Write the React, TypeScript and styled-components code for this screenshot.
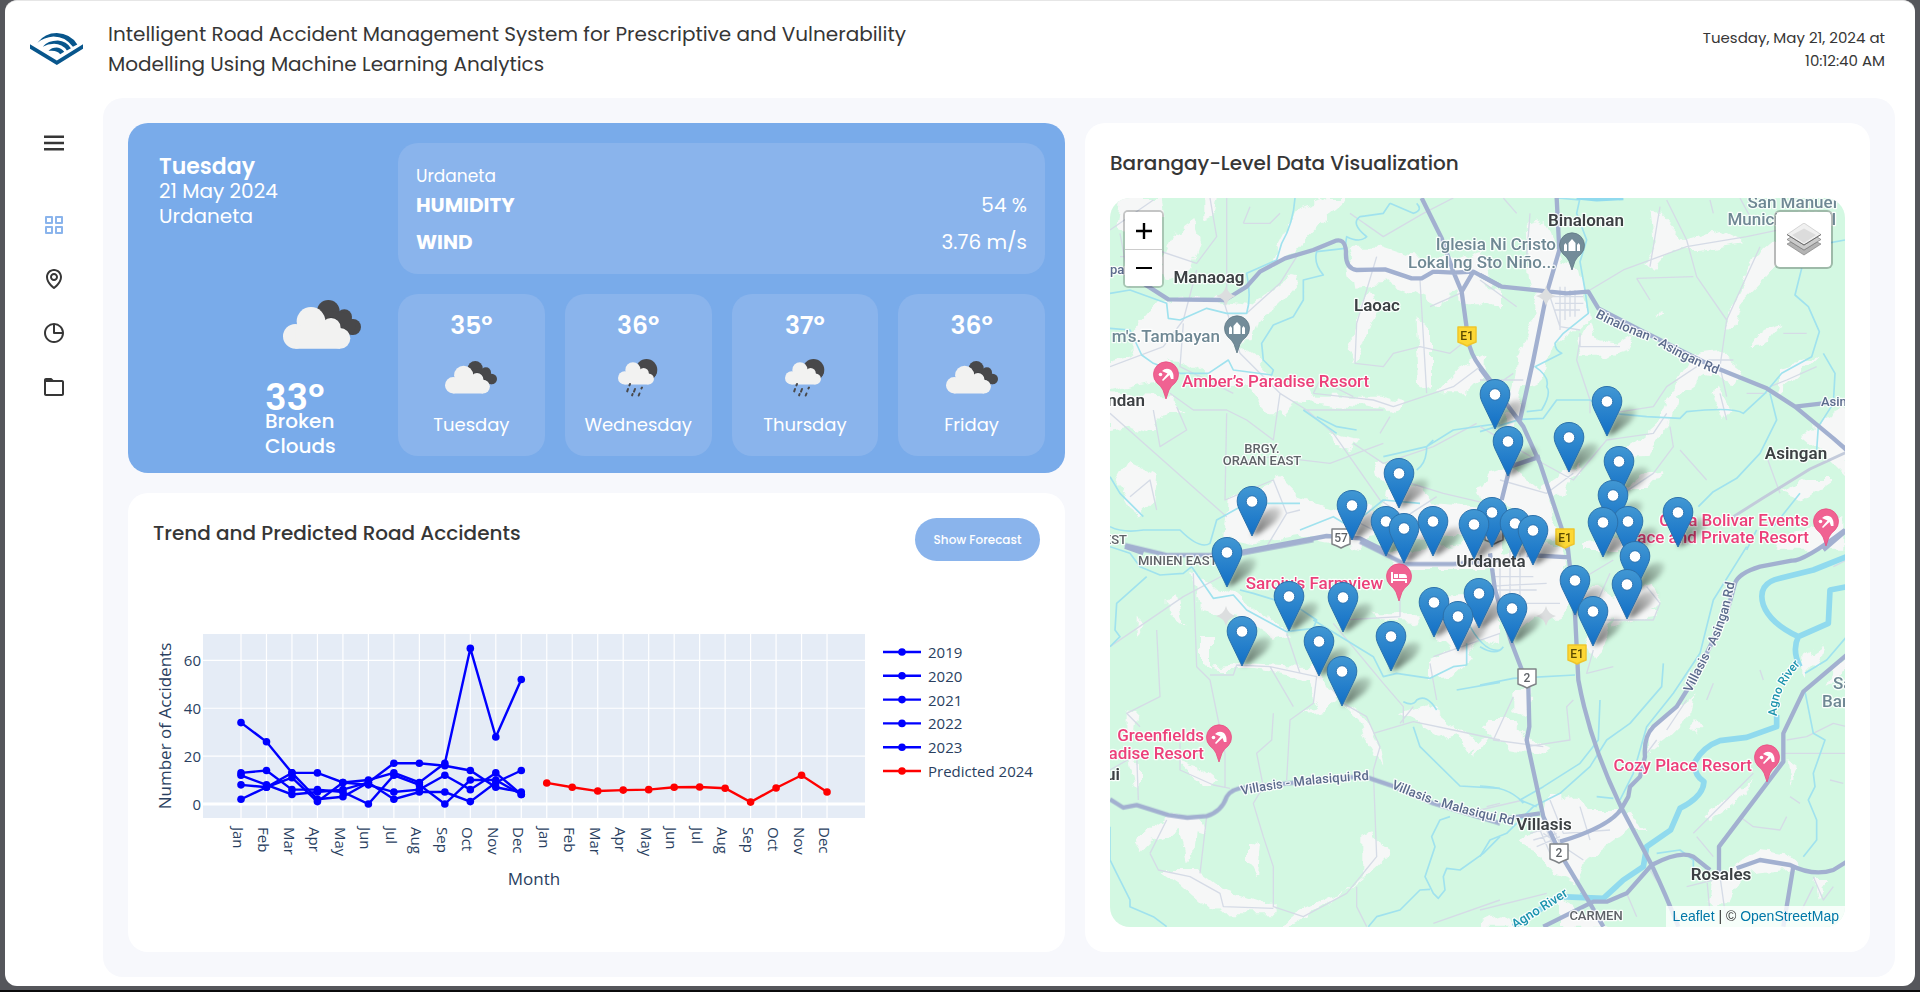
import React from "react";
import styled, { createGlobalStyle } from "styled-components";
import { BiMenu, BiGridAlt, BiMap, BiPieChartAlt, BiFolder } from "react-icons/bi";

const GlobalStyle = createGlobalStyle`
  *, *::before, *::after { box-sizing: border-box; }
  body {
    margin: 0;
    background: #55565b;
    color: #363636;
    font-family: "Poppins", "Inter", sans-serif;
  }
  h1, h2, p, ul, dl, dd, dt { margin: 0; padding: 0; }
  button { font-family: inherit; }
`;

/* ---------- page shell ---------- */

const Frame = styled.div`
  min-height: 100vh;
  padding: 0 5px 4px;
  border-bottom: 2px solid #0b0b0c;
  display: flex;
  flex-direction: column;
`;

const Shell = styled.div`
  flex: 1;
  display: flex;
  flex-direction: column;
  background: #ffffff;
  border-top: 1px solid #e6e6e6;
  border-radius: 12px;
`;

const Header = styled.header`
  min-height: 97px;
  padding: 0 30px 2px 25px;
  display: flex;
  align-items: center;
  gap: 25px;
`;

const PageTitle = styled.h1`
  flex: 0 1 820px;
  font-size: 20px;
  font-weight: 400;
  line-height: 30px;
`;

const Clock = styled.time`
  margin-left: auto;
  width: 200px;
  font-size: 15px;
  line-height: 23px;
  text-align: right;
`;

const Body = styled.div`
  flex: 1;
  display: flex;
  padding: 0 20px 9px 0;
`;

const Sidebar = styled.aside`
  flex: 0 0 98px;
  padding-top: 18px;
  display: flex;
  flex-direction: column;
  align-items: center;
  gap: 28px;
`;

const MenuButton = styled.button`
  width: 54px;
  height: 54px;
  padding: 0;
  border: 0;
  background: none;
  color: #363636;
  font-size: 30px;
  display: grid;
  place-items: center;
  cursor: pointer;
`;

const NavList = styled.ul`
  list-style: none;
`;

const NavLink = styled.a<{ $active?: boolean }>`
  width: 54px;
  height: 54px;
  display: grid;
  place-items: center;
  font-size: 24px;
  color: ${(p) => (p.$active ? "#8ab4ec" : "#363636")};
`;

const Main = styled.main`
  flex: 1;
  min-width: 0;
  padding: 25px;
  border-radius: 20px;
  background: #f7f8fc;
  display: grid;
  grid-template-columns: minmax(0, 937fr) minmax(0, 785fr);
  gap: 20px;
`;

const LeftColumn = styled.div`
  display: flex;
  flex-direction: column;
  gap: 20px;
`;

const Card = styled.section`
  padding: 25px;
  border-radius: 20px;
  background: #ffffff;
  display: flex;
  flex-direction: column;
`;

const ChartCard = styled(Card)`
  flex: 1;
`;

const CardHeader = styled.div`
  display: flex;
  justify-content: space-between;
  align-items: flex-start;
`;

const CardTitle = styled.h2`
  font-size: 20px;
  font-weight: 500;
  line-height: 30px;
`;

const PillButton = styled.button`
  width: 125px;
  height: 43px;
  padding: 0;
  border: 0;
  border-radius: 22px;
  background: #8ab4ec;
  color: #ffffff;
  font-size: 12px;
  font-weight: 500;
  cursor: pointer;
`;

/* ---------- weather ---------- */

const WeatherCard = styled.section`
  min-height: 350px;
  padding: 20px 20px 14px 31px;
  border-radius: 20px;
  background: #79abea;
  color: #ffffff;
  display: grid;
  grid-template-columns: 239px minmax(0, 1fr);
`;

const Today = styled.div`
  padding-top: 11px;
  display: flex;
  flex-direction: column;
  font-size: 20px;
  line-height: 25px;
`;

const Weekday = styled.h2`
  font-size: 22px;
  font-weight: 600;
  line-height: 25px;
`;

const TodayIcon = styled.div`
  margin: auto 0 0 124px;
  line-height: 0;
`;

const TodayNow = styled.div`
  margin: 38px 0 0 106px;
  font-weight: 500;
`;

const BigTemp = styled.p`
  font-size: 36px;
  font-weight: 600;
  line-height: 22px;
`;

const WeatherDetail = styled.div`
  padding-bottom: 3px;
  display: grid;
  grid-template-rows: 131px 1fr;
  gap: 20px;
`;

const Panel = styled.div`
  padding: 22px 18px 20px;
  border-radius: 20px;
  background: #8ab4ec;
`;

const Place = styled.p`
  font-size: 17px;
  line-height: 22px;
`;

const Metrics = styled.dl`
  font-size: 20px;
  line-height: 37px;
`;

const Metric = styled.div`
  display: flex;
  justify-content: space-between;

  dt { font-weight: 700; }
`;

const Days = styled.ul`
  list-style: none;
  display: grid;
  grid-template-columns: repeat(4, minmax(0, 1fr));
  gap: 20px;
`;

const Day = styled.li`
  padding: 14px 0 17px;
  border-radius: 20px;
  background: #8ab4ec;
  display: flex;
  flex-direction: column;
  align-items: center;
`;

const DayTemp = styled.p`
  font-size: 25px;
  font-weight: 600;
  line-height: 36px;
`;

const DayIcon = styled.div`
  flex: 1;
  display: grid;
  place-items: center;
`;

const DayName = styled.p`
  font-size: 18px;
  line-height: 28px;
`;

function LightCloud() {
  return (
    <g fill="#f2f2f1">
      <circle cx="84" cy="64" r="43" />
      <circle cx="37" cy="109" r="37" />
      <circle cx="144" cy="83" r="29" />
      <circle cx="171" cy="115" r="31" />
      <path d="M37 90H60V60H110V80H165V95H171V146H37Z" />
    </g>
  );
}

function CloudsIcon({ width }: { width: number }) {
  return (
    <svg width={width} viewBox="0 0 234 146" role="img" aria-label="Broken clouds">
      <g fill="#48484a">
        <circle cx="136" cy="34" r="34" />
        <circle cx="184" cy="51" r="23" />
        <circle cx="210" cy="81" r="24" />
        <path d="M110 30L190 40L220 70L210 105L140 90Z" />
      </g>
      <path
        d="M110 30A44 44 0 0 1 126 54M140 53A30 30 0 0 1 173 84A32 32 0 0 1 201 106"
        stroke="#2d2f35"
        strokeOpacity="0.5"
        strokeWidth="3"
        fill="none"
      />
      <LightCloud />
    </svg>
  );
}

function RainIcon() {
  return (
    <svg width="40" viewBox="0 0 40 38" role="img" aria-label="Shower rain">
      <circle cx="28.500" cy="10.800" r="10.800" fill="#48484a" />
      <path d="M33 12L39 12Q38 17 35.500 19Z" fill="#48484a" />
      <g transform="translate(0 -0.5) scale(0.178)">
        <LightCloud />
      </g>
      <g stroke="#48484a" strokeWidth="2" strokeLinecap="round">
        <path d="M12 25l-.6 1.4M10 30l-.8 2.4M17 30l-1 2.6M24 28.500l-.6 1M14.600 35l-.5 1.400M21.500 34.500l-.8 2" />
      </g>
    </svg>
  );
}

const forecast = [
  { day: "Tuesday", temp: 35, rain: false },
  { day: "Wednesday", temp: 36, rain: true },
  { day: "Thursday", temp: 37, rain: true },
  { day: "Friday", temp: 36, rain: false },
];

function Weather() {
  return (
    <WeatherCard aria-label="Weather">
      <Today>
        <Weekday>Tuesday</Weekday>
        <p>21 May 2024</p>
        <p>Urdaneta</p>
        <TodayIcon>
          <CloudsIcon width={78} />
        </TodayIcon>
        <TodayNow>
          <BigTemp>33º</BigTemp>
          <p>Broken</p>
          <p>Clouds</p>
        </TodayNow>
      </Today>
      <WeatherDetail>
        <Panel>
          <Place>Urdaneta</Place>
          <Metrics>
            <Metric>
              <dt>HUMIDITY</dt>
              <dd>54 %</dd>
            </Metric>
            <Metric>
              <dt>WIND</dt>
              <dd>3.76 m/s</dd>
            </Metric>
          </Metrics>
        </Panel>
        <Days>
          {forecast.map((f) => (
            <Day key={f.day}>
              <DayTemp>{f.temp}º</DayTemp>
              <DayIcon>{f.rain ? <RainIcon /> : <CloudsIcon width={52} />}</DayIcon>
              <DayName>{f.day}</DayName>
            </Day>
          ))}
        </Days>
      </WeatherDetail>
    </WeatherCard>
  );
}

/* ---------- chart ---------- */

const ChartSvg = styled.svg`
  flex: 1;
  width: 100%;
  min-height: 366px;
  font-family: "Open Sans", sans-serif;
  fill: #2a3f5f;
`;

const months = ["Jan", "Feb", "Mar", "Apr", "May", "Jun", "Jul", "Aug", "Sep", "Oct", "Nov", "Dec"];

const history: Record<string, number[]> = {
  "2019": [34, 26, 13, 2, 3, 9, 17, 17, 16, 14, 7, 5],
  "2020": [13, 14, 6, 6, 5, 0, 12, 8, 0, 10, 10, 4],
  "2021": [8, 7, 11, 1, 9, 8, 5, 6, 12, 6, 13, 4],
  "2022": [12, 8, 4, 5, 6, 9, 2, 5, 5, 1, 9, 14],
  "2023": [2, 7, 13, 13, 9, 10, 13, 9, 17, 65, 28, 52],
};
const predicted = [8.8, 7, 5.4, 5.8, 6, 7, 7.1, 6.6, 0.8, 6.7, 12, 5];

const PLOT = { left: 50, top: 73, width: 662, height: 184 };
const tickX = (i: number) => 88 + i * 25.48;
const valueY = (v: number) => 243 - v * 2.394;

function Series({ values, start, color }: { values: number[]; start: number; color: string }) {
  const points = values.map((v, i) => [tickX(start + i), valueY(v)]);
  return (
    <g fill={color}>
      <polyline points={points.map((p) => p.join(",")).join(" ")} fill="none" stroke={color} strokeWidth="2.400" />
      {points.map(([x, y]) => (
        <circle key={x} cx={x} cy={y} r="3.800" />
      ))}
    </g>
  );
}

function AccidentChart() {
  const ticks = [...months, ...months];
  const legend = [...Object.keys(history), "Predicted 2024"];
  return (
    <ChartSvg viewBox="0 0 887 366" role="img" aria-label="Number of accidents by month">
      <rect x={PLOT.left} y={PLOT.top} width={PLOT.width} height={PLOT.height} fill="#e5ecf6" />
      <g stroke="#ffffff" strokeWidth="1.200">
        {ticks.map((_, i) => (
          <line key={i} x1={tickX(i)} x2={tickX(i)} y1={PLOT.top} y2={PLOT.top + PLOT.height} />
        ))}
        {[0, 20, 40, 60].map((v) => (
          <line
            key={v}
            x1={PLOT.left}
            x2={PLOT.left + PLOT.width}
            y1={valueY(v)}
            y2={valueY(v)}
            strokeWidth={v === 0 ? 3 : 1.2}
          />
        ))}
      </g>
      {Object.entries(history).map(([year, values]) => (
        <Series key={year} values={values} start={0} color="#0000ff" />
      ))}
      <Series values={predicted} start={12} color="#ff0000" />
      <g fontSize="15">
        {[0, 20, 40, 60].map((v) => (
          <text key={v} x="48" y={valueY(v) + 6} textAnchor="end">
            {v}
          </text>
        ))}
        {legend.map((name, i) => {
          const y = 91 + i * 23.8;
          const color = name.startsWith("Pred") ? "#ff0000" : "#0000ff";
          return (
            <g key={name}>
              <line x1="730" x2="768" y1={y} y2={y} stroke={color} strokeWidth="2.400" />
              <circle cx="749" cy={y} r="3.800" fill={color} />
              <text x="775" y={y + 6}>
                {name}
              </text>
            </g>
          );
        })}
      </g>
      <g fontSize="15">
        {ticks.map((m, i) => (
          <text key={i} transform={`translate(${tickX(i) - 8} 266) rotate(90)`}>
            {m}
          </text>
        ))}
      </g>
      <g fontSize="17">
        <text transform="translate(18 165) rotate(-90)" textAnchor="middle">
          Number of Accidents
        </text>
        <text x="381" y="324" textAnchor="middle">
          Month
        </text>
      </g>
    </ChartSvg>
  );
}

/* ---------- map ---------- */

const MapArea = styled.div`
  position: relative;
  flex: 1;
  min-height: 500px;
  margin-top: 20px;
  border-radius: 20px;
  overflow: hidden;
`;

const MapSvg = styled.svg`
  position: absolute;
  inset: 0;
  width: 100%;
  height: 100%;
  background: #d3f8e2;
  font-family: "Roboto", sans-serif;
`;

const ZoomControl = styled.div`
  position: absolute;
  top: 12px;
  left: 13px;
  width: 41px;
  border: 2px solid rgba(0, 0, 0, 0.2);
  border-radius: 5px;
  background-clip: padding-box;
  overflow: hidden;
`;

const ZoomButton = styled.button`
  display: grid;
  place-items: center;
  width: 100%;
  height: 37px;
  padding: 0;
  border: 0;
  background: #ffffff;
  cursor: pointer;

  & + & { border-top: 1px solid #cccccc; }
`;

const LayersButton = styled.button`
  position: absolute;
  top: 12px;
  right: 12px;
  width: 59px;
  height: 59px;
  padding: 0;
  border: 2px solid rgba(0, 0, 0, 0.25);
  border-radius: 6px;
  background: #ffffff;
  background-clip: padding-box;
  display: grid;
  place-items: center;
  cursor: pointer;
`;

const Attribution = styled.p`
  position: absolute;
  right: 0;
  bottom: 0;
  padding: 0 6px;
  background: rgba(255, 255, 255, 0.8);
  font-family: "Liberation Sans", Arial, sans-serif;
  font-size: 14px;
  line-height: 21px;

  a {
    color: #0078a8;
    text-decoration: none;
  }
`;

type Tile = {
  origin: string;
  patches: string;
  minor: string;
  streams: string;
  river?: string;
  roads: string;
};

/* Each quarter of the map is plotted on a grid three times finer than the screen. */
const tiles: Tile[] = [
  {
    origin: "translate(-10 -18)",
    patches:
      "M60 54h130l10 50-50 20-60 40-40-20zM210 170l70-50 20 60-30 90-70 30-20-60zM310 54l40 0-10 50-30 10zM590 90l90-36 60 0-60 50-50 60-50 60-70 40 20-60zM170 370l110-20 180 20 120-90 20 20-60 70-60 40-20 80-60 0-60 40-100 20-130-20-30-60zM250 470l120 0 90 60 60 60 60 50-20 60-60 0-60-80-80-10-100-60zM30 540l130-40 60 60-60 40-130 30zM30 640l180 10 40 40-60 10-40 60-60-20-60 10zM90 840l80 40-10 80-50 50-60-100zM740 200l90 0 90 30 150 10 80-30 30 100-110 20-60 40-80-40-60-20-110 10zM800 340l40 30-30 80-50 100-20-40zM1060 300l60 0 80 30 0 60-60-20-60 0zM500 640l110-50 30 60 200 0 80 20-40 30-80-20-220-20-30 60zM690 760l90 20-20 30-60-10zM950 420l40 20 0 190-30-20zM1080 560l80-40 0 60-60 60-90 0zM380 960l160-70 60 60 120 40 60-40 60 80-60 80-180-40-140 20-90-20zM820 840l40 10 50 100-70-40zM860 940l90-30 60 60 190 20 0 80-360 0z",
    minor:
      "M30 150L160 60M130 110L170 210 290 250 350 170 330 54M430 130H510L540 100M60 160L90 320M290 270L250 420 190 500 30 560M370 360L420 520 540 640 620 690 700 760 840 960 900 1000M380 54V340M590 230L540 310 440 400M750 100L850 170 970 100 1060 54M830 230L770 430 765 550 850 560 880 520 960 500 1050 520 1100 480M960 300L980 640M990 380L1080 340M540 640L520 780 440 720 380 690 280 690 210 640M30 700L380 1010M160 690L180 800 260 750 230 680M640 640L820 660 880 680 1060 620 1140 560M760 790L850 850 1000 800 1130 730M380 700L375 960 520 900 560 1000 600 990M610 690L850 690M370 850L520 830 690 850 850 790M900 900L1030 940 1200 980M720 1000L840 1060 1010 950M500 1100L560 1000M90 950L150 900 170 990M250 430L240 560 400 640M450 80L430 130M60 230H130L150 160M640 640L660 600 760 650M870 710L840 760",
    streams:
      "M585 54Q580 130 545 190L530 240 440 280Q455 350 440 400L380 400 320 385 240 420 205 415 200 370 90 330 30 340M870 70L940 100Q970 90 950 70M870 70L850 100 780 110Q750 130 800 170 780 190 740 170L735 205 650 215Q640 250 670 285L610 300 610 360 580 410 520 435 485 490 490 540 520 570 515 585 400 570 385 540 325 580 240 580 160 550 125 525 90 450 30 445M610 690L710 760M650 710L710 740 770 750M1200 730L1060 750 980 800 850 830M1000 780L980 800Q980 850 950 870M30 890L60 940 130 1010M30 1040Q70 1060 130 1050L240 1050Q300 1110 330 1090L350 1020 440 970 600 970M600 1050L700 1010 750 1040 850 960 960 970",
    roads:
      "M60 270L130 310 205 358 375 360 440 320 480 275 555 235 640 210 700 185Q735 170 738 215 735 265 770 270L855 268 935 295 965 295 1000 275 1060 278 1120 275 1200 318M965 54L1025 175 1060 275 1085 335 1105 480Q1110 520 1140 560L1200 640M1120 275L1085 335M75 1100L130 1120M400 1120L680 1068 780 1075 850 1110",
  },
  {
    origin: "translate(370 -18)",
    patches:
      "M140 140l60-20 40 130 60 30 30 130-60 60-60 40-20 80-60 30-30 140-20-20 30-210 60-130-20-100zM520 80l90 100 100-30 80 40-130 20-90 0-50 60-30-20 40-60zM850 200l60-50 60 20-60 60-60 70-60 60-20 70-40 20 40-110zM540 390l10 10-20 20zM300 480l30-60 20 70 60 10 50-30-20 40-70 20-60 0zM800 510l40-50 60-20-30 40-60 30zM640 520l70-10 80 60-20 40-90-20-90 60-20 80-70 100-120 10 80-50 70-60 50-110zM710 620l40 70-20 30-30-60zM910 560l100-30-60 60-60 50zM1020 720l80-40 0 210-60-60-70-60zM30 880l60-20 90 70 120-80-40 80-50 40 20 100-60 20-40-80-60-40-80-30zM900 940l80-40 80 0-90 60zM300 1090l190-20 0 40-190 0zM430 930l60-50 60-10-50 60zM900 1070l190-60v99h-200z",
    minor:
      "M0 300L110 380M200 320L240 440 300 450M240 320V450M255 320V420M270 330V410M285 330V410M220 350H310M225 370H310M225 390H300M150 100L140 230 100 250M70 54L110 100M560 60L620 180 650 290 740 420 720 560 740 650M330 330L430 270 620 200 800 170 990 130M840 200L740 420M470 295L510 360M470 295L640 290M540 80L510 260M690 60L700 100M780 54L810 110M300 480L290 540 330 660 330 700M390 700L520 680 560 620 680 540 760 540M300 460L300 500 420 500M0 600H130M100 580L0 650M0 740L170 840 280 900 380 780 520 760 560 700M860 830L900 940M430 940L520 880 580 800 570 740M1010 560L920 600 870 620M720 640L740 720M600 810L680 900M910 460L980 460M60 900L200 940 280 880M800 640L860 640",
    streams:
      "M965 265L945 345 985 380 1018 455 995 530 905 580 855 640 790 700Q760 680 620 695L600 715 500 710 400 700 330 660 230 660 190 715 120 718 0 755M870 640L890 720 840 820 770 895 700 935 655 980M1030 520L1065 580 1060 670 1015 740 1010 810M300 54L290 100 320 180 300 245 315 330 325 400 250 460 225 490Q225 510 245 520L165 560Q210 590 200 620 215 640 185 690L140 695M960 940L880 1040M230 54L300 60M830 1050L800 1110M1095 180L1040 190",
    river: "M290 50L350 56 430 52",
    roads:
      "M230 54L238 210 200 340 160 540 120 720M0 285L65 320 260 340 325 335 355 385 480 450 700 560 860 625 945 680 1060 775 1100 810M945 680L1100 662M0 565L130 740 180 850 250 1060 262 1110M180 830L90 860 65 960M1030 1110L1100 1050",
  },
  {
    origin: "translate(-10 342)",
    patches:
      "M200 170l30-10 20 100-50-40zM270 90l50 40 100 40 100 80 60 30-60 10-80-50-80-20-60-10zM110 230l20 20-20 40zM300 300l30 0 0 90-30-30zM330 380l110-10 220 10 20 90-40 20-10-70-170-30-110 0zM640 420l90 70 60 40 50 90 10 60-50-80-20-60-60-60-50 30-60 10 60-50zM80 510l30 10-10 60-20-20zM820 220l140 0-20 30-100-10zM990 360l80-40 40 30-60 60-60 10zM900 520l80-30 60 50 100 70-30 30-40-60-50 10-80-50zM1110 610l60-20-40 60zM110 900l50-40 60-40 80 20 20 50-30-10-10 70-20 10-20-90-80 30-30 30zM450 900l30 10-10 100-20-40zM790 890l30-10 20 40 30 20-40 40-80 70-60 20-100 50-60 50 60 0 70 10-30 20-100-20 100-60 100-60 60-50zM180 990l110 0 80 60 110 40-10 30-140-10-90-80zM370 1100l160-10 0 30-180 0zM80 650l40 20 0 80-20-20zM230 660l60 20 60 50-30 10-50-40zM1000 160l200 0 0 160-60-20-60 60-60-60zM850 40l350-40 0 90-300 0z",
    minor:
      "M280 100L290 380 330 420 375 640 375 740M30 320L250 170 400 90M170 270L180 470 80 520 120 560M330 405L400 405 410 375 510 380 650 410 640 490 570 540 560 720M520 520L515 600 470 640 490 740 460 790 490 890 520 980 520 1100 610 1130 740 1060 830 950 820 690 840 620 800 530 730 490 690 440M820 580L940 545 1060 570 1200 600M700 250L850 430 910 500 910 550M560 280L600 400M900 170V230M730 240L900 230M990 370L1010 480M1000 350L1200 280M110 640L115 780M240 610L240 690 340 735 390 745M150 940L200 840M320 830L300 1000M150 940L175 990 270 1010 360 1060 370 1100 520 1105M770 1040V1100L800 1160M580 500L510 380M1160 800L1200 790M1000 1150L1200 1080M30 690L100 650M900 550L940 500",
    streams:
      "M30 20L90 40 120 80 180 105 250 100 275 80 340 175 400 165 440 210 560 275 640 265 650 240 590 200 460 160 420 150M640 240L820 350 850 410 890 400 990 415 1060 380 1100 375 1100 310M140 110L50 190 45 270 60 290 30 320M910 485Q940 500 950 480 980 460 1010 510M940 560L960 620 1080 738 1200 745M1070 450L1200 427M1050 830L1020 840 995 890 1005 920 975 1010 1000 1060 1015 1075 1035 1050 1030 1010 1040 985 1080 990 1150 940 1200 890M990 1048L960 1050 900 1110 830 1130 805 1160M30 860V960L50 1000 90 1080 90 1100 160 1130 200 1160M1100 240Q1150 340 1200 330",
    roads:
      "M75 15L200 45 400 45 640 0M780 5L915 72 1060 72 1200 60M30 778L70 803 110 795 205 825 262 833 320 828Q365 815 380 770 395 745 440 742L790 708 870 735 1000 790 1200 850",
  },
  {
    origin: "translate(370 342)",
    patches:
      "M30 60l130-60 90 20 20 160-20 50-90 0-60 50-50-60zM290 170l60-30 60 40-40 120-30 60-20-60zM380 180l130-40 30 40-60 60-80 20zM100 450l40 0 20 20-20 60-40-20zM40 540l60 0 60 60 60 20-20 30-110-20-80-60zM590 500l50-30-10 60-60 60-60 50-10-60zM640 530l20 30-20 20zM190 780l80-20 60 50 90 0 80 60-60 0-70 50-60 50-20 60-60-20-60-80-50-20 60-50zM680 820l70-50 60-50-30 60-90 60zM780 960l60-30 80 10 40 40-70 10-100 10-40 90-60 0 10-80zM1000 1020l50 0-40 50zM1040 440l20-60 60-30-60 80zM920 660l30 20-20 60zM0 1140l60-20 80 40-140 0zM240 1080l80 40 60 40-140 0zM970 350l60-40-20 60-40 40zM440 210l90 0 0 20-80 10z",
    minor:
      "M60 60V230M90 30V250M120 40V220M40 110H160M50 150H170M50 190H240M300 120L400 60M390 100L350 190M340 240L520 240 540 190 500 140M340 330L320 400 400 380M100 470L40 600 190 620M280 480L260 500 270 600 140 620M210 780L250 880 390 870M190 880L310 960M150 880L220 860M160 900L230 880M170 920L240 890M180 870L210 940M195 860L230 940M210 850L250 930M300 800L330 900M560 570L620 480M530 600L500 640M700 430L680 480M840 390L850 420M640 880L700 820 820 700M650 890L700 950M850 740L780 830 820 860 900 870 920 830M680 1010L690 1120M720 1010L740 1150M1000 1010L1030 1080 1060 1040M440 1060L470 1130M620 1040L700 1020M930 770L960 790M1000 1040L960 1120M0 810L130 780M0 1110L200 1060M1060 80L1100 60M920 600L980 590 1060 550 1100 560M910 640L1100 640M1050 720L1090 730M0 140L200 130M510 990L560 1070",
    streams:
      "M800 20L700 180 660 340 580 460 500 560 460 700 420 780M550 370L545 440 450 550 380 600 330 680 240 760 160 800 80 880 30 900 0 950M0 435L100 415 285 405M360 480L355 600 300 670 190 740 120 780 170 800M975 455L1000 580 1035 600 1000 700 1005 740 985 780 1010 840 1010 900 970 950M1100 290L1040 360 975 400M350 770L400 775M0 738Q90 740 130 790M530 940L600 930 640 960 640 1020M0 320Q50 350 70 320M300 1060L330 1070",
    river:
      "M1100 50L1000 90 900 115Q830 130 850 195 870 250 955 290L1045 250 1050 150 1100 140M955 290Q935 330 960 380M890 525L890 560 800 592 720 602Q670 620 645 665 640 705 672 725 670 770 600 805L572 870 500 920 490 980 430 1020 370 1075 240 1070 100 1160",
    roads:
      "M262 10L285 220 295 420Q330 610 425 805L515 975Q560 1070 595 1160M30 40L45 150 95 310 145 440 148 560 140 600 190 830 240 940 330 1090 370 1160M240 905Q390 860 425 805L445 770 450 740 480 710 495 650Q490 590 520 560L590 500 640 420 740 220 765 130Q775 100 840 80L935 62Q970 65 1095 -30M190 1160L340 1085 380 1085 440 1060 515 975Q600 930 640 950L690 990M770 985L840 960 930 975Q1000 1010 1060 990L1100 965M940 980L910 1160M717 1000L717 920 910 665 910 580 970 455 1100 345M80 835L180 820M140 45L270 52",
  },
];

const accidentPins = [
  [385, 231], [497, 238], [459, 274], [398, 278], [509, 298], [289, 310], [503, 332], [142, 338],
  [242, 342], [382, 349], [568, 349], [276, 358], [323, 358], [518, 358], [493, 359], [405, 360],
  [364, 361], [294, 365], [423, 367], [117, 389], [525, 393], [465, 417], [517, 421], [369, 430],
  [179, 433], [233, 434], [324, 439], [402, 445], [483, 448], [348, 453], [132, 468], [281, 473],
  [209, 478], [232, 508],
];

function PinShadow({ x, y }: { x: number; y: number }) {
  return (
    <path
      transform={`translate(${x} ${y})`}
      d="M0 0L8 -20Q18 -31 28 -28 32 -23 22 -13L8 -3Z"
      fill="url(#shade)"
      filter="url(#soft)"
    />
  );
}

function AccidentPin({ x, y }: { x: number; y: number }) {
  return (
    <g transform={`translate(${x} ${y})`}>
      <path
        d="M0 -49.500C-8.500 -49.500 -14.800 -43 -14.800 -35 -14.800 -31 -13.500 -28 -12 -25L0 0 12 -25C13.500 -28 14.800 -31 14.800 -35 14.800 -43 8.500 -49.500 0 -49.500Z"
        fill="url(#pinBlue)"
        stroke="#2a70ab"
        strokeWidth="1"
      />
      <circle cy="-34.500" r="5.800" fill="#ffffff" stroke="#2a73b3" strokeWidth="1" />
    </g>
  );
}

function PoiPin({ x, y, kind }: { x: number; y: number; kind: "resort" | "hotel" | "church" }) {
  const church = kind === "church";
  return (
    <g transform={`translate(${x} ${y})`}>
      <path
        d="M0 0L-3 -9Q-5 -13 -9 -16A12.500 12.500 0 1 1 9 -16Q5 -13 3 -9Z"
        fill={church ? "#738c99" : "#f06292"}
        stroke={church ? "#607985" : "#e84d82"}
        strokeWidth="0.800"
      />
      {kind === "church" && (
        <path d="M-8 -19V-25L-6.500 -27 -5 -25V-19ZM-3.500 -19V-27L0 -31 3.500 -27V-19ZM5 -19V-25L6.500 -27 8 -25V-19Z" fill="#ffffff" />
      )}
      {kind === "hotel" && (
        <path d="M-8 -29H-6V-22H8V-18H6V-20H-6V-18H-8ZM-5 -27H-1V-23H-5ZM0 -27H5Q8 -27 8 -23H0Z" fill="#ffffff" />
      )}
      {kind === "resort" && (
        <g fill="#ffffff">
          <circle cx="-5.500" cy="-24.500" r="1.800" />
          <path d="M-4 -28Q0 -32 5 -29 8 -26 7.500 -20L5 -20 3.500 -24 -3 -18 -4 -19 1.500 -25.500 -2 -27Z" />
        </g>
      )}
    </g>
  );
}

function Shield({ x, y, text, yellow }: { x: number; y: number; text: string; yellow?: boolean }) {
  return (
    <g transform={`translate(${x} ${y})`}>
      <path
        d="M-9 -9H9V6L4 8 0 10 -4 8 -9 6Z"
        fill={yellow ? "#fdd835" : "#ffffff"}
        stroke={yellow ? "#f0c52b" : "#808488"}
        strokeWidth="1.500"
        strokeLinejoin="round"
      />
      <text y="4" fontSize="12" fontWeight="500" textAnchor="middle" fill={yellow ? "#5c4b00" : "#5f6368"}>
        {text}
      </text>
    </g>
  );
}

type LabelKind = "town" | "area" | "resort" | "poi" | "road";

const labelStyles: Record<LabelKind, { size: number; weight: number; fill: string }> = {
  town: { size: 17, weight: 600, fill: "#3c4043" },
  area: { size: 13, weight: 500, fill: "#5f6368" },
  resort: { size: 17, weight: 500, fill: "#ec407a" },
  poi: { size: 17, weight: 500, fill: "#6f8894" },
  road: { size: 13, weight: 500, fill: "#5b6b8c" },
};

type Label = { text: string; x: number; y: number; kind: LabelKind; anchor?: "start" | "middle" | "end" };

const labels: Label[] = [
  { text: "Manaoag", x: 99, y: 85, kind: "town", anchor: "middle" },
  { text: "Laoac", x: 267, y: 113, kind: "town", anchor: "middle" },
  { text: "Binalonan", x: 476, y: 28, kind: "town", anchor: "middle" },
  { text: "Asingan", x: 686, y: 261, kind: "town", anchor: "middle" },
  { text: "Urdaneta", x: 381, y: 369, kind: "town", anchor: "middle" },
  { text: "Villasis", x: 434, y: 632, kind: "town", anchor: "middle" },
  { text: "Rosales", x: 611, y: 682, kind: "town", anchor: "middle" },
  { text: "ndan", x: 35, y: 208, kind: "town", anchor: "end" },
  { text: "ui", x: 10, y: 582, kind: "town", anchor: "end" },
  { text: "BRGY.", x: 152, y: 255, kind: "area", anchor: "middle" },
  { text: "ORAAN EAST", x: 152, y: 267, kind: "area", anchor: "middle" },
  { text: "EST", x: 17, y: 346, kind: "area", anchor: "end" },
  { text: "MINIEN EAST", x: 28, y: 367, kind: "area" },
  { text: "CARMEN", x: 486, y: 722, kind: "area", anchor: "middle" },
  { text: "Iglesia Ni Cristo", x: 446, y: 52, kind: "poi", anchor: "end" },
  { text: "Lokal ng Sto Niño...", x: 446, y: 70, kind: "poi", anchor: "end" },
  { text: "m's.Tambayan", x: 110, y: 144, kind: "poi", anchor: "end" },
  { text: "San Manuel", x: 727, y: 10, kind: "poi", anchor: "end" },
  { text: "Municipal Hall", x: 726, y: 27, kind: "poi", anchor: "end" },
  { text: "Sa", x: 723, y: 491, kind: "poi" },
  { text: "Bar", x: 712, y: 509, kind: "poi" },
  { text: "Amber’s Paradise Resort", x: 72, y: 189, kind: "resort" },
  { text: "Casa Bolivar Events", x: 699, y: 328, kind: "resort", anchor: "end" },
  { text: "Place and Private Resort", x: 699, y: 345, kind: "resort", anchor: "end" },
  { text: "Saroju's Farmview", x: 273, y: 391, kind: "resort", anchor: "end" },
  { text: "Greenfields", x: 94, y: 543, kind: "resort", anchor: "end" },
  { text: "adise Resort", x: 94, y: 561, kind: "resort", anchor: "end" },
  { text: "Cozy Place Resort", x: 642, y: 573, kind: "resort", anchor: "end" },
  { text: "par", x: 0, y: 76, kind: "road" },
  { text: "Asin", x: 711, y: 208, kind: "road" },
];

const pathLabels = [
  { id: "binalonan", text: "Binalonan - Asingan Rd", size: 13, d: "M485 119Q515 135 543 144 575 165 620 181", fill: "#5b6b8c" },
  { id: "malasiqui1", text: "Villasis - Malasiqui Rd", size: 13, d: "M132 597Q190 585 275 581", fill: "#5b6b8c" },
  { id: "malasiqui2", text: "Villasis - Malasiqui Rd", size: 13, d: "M281 590Q340 616 420 630", fill: "#5b6b8c" },
  { id: "asingan", text: "Villasis - Asingan Rd", size: 13, d: "M581 495L605 448Q622 415 628 360", fill: "#5b6b8c" },
  { id: "agno1", text: "Agno River", size: 12, d: "M667 518Q664 492 700 456", fill: "#1b93ad" },
  { id: "agno2", text: "Agno River", size: 13, d: "M405 731L480 684", fill: "#1b93ad" },
];

function MapDrawing() {
  return (
    <MapSvg viewBox="0 0 735 729" preserveAspectRatio="xMidYMid slice" role="img" aria-label="Map of Urdaneta">
      <defs>
        <linearGradient id="pinBlue" x1="0" y1="0" x2="0" y2="1">
          <stop offset="0" stopColor="#4197d3" />
          <stop offset="1" stopColor="#126fc6" />
        </linearGradient>
        <linearGradient id="shade" x1="0" y1="1" x2="1" y2="0">
          <stop offset="0" stopColor="#000000" stopOpacity="0.600" />
          <stop offset="1" stopColor="#000000" stopOpacity="0.100" />
        </linearGradient>
        <filter id="soft" x="-50%" y="-50%" width="200%" height="200%">
          <feGaussianBlur stdDeviation="2.500" />
        </filter>
        <filter id="rough" x="-5%" y="-5%" width="110%" height="110%">
          <feTurbulence type="fractalNoise" baseFrequency="0.060" numOctaves="3" seed="4" />
          <feDisplacementMap in="SourceGraphic" scale="14" xChannelSelector="R" yChannelSelector="G" />
        </filter>
        {pathLabels.map((p) => (
          <path key={p.id} id={p.id} d={p.d} />
        ))}
      </defs>
      <g filter="url(#rough)">
        {tiles.map((t) => (
          <path key={t.origin} transform={`${t.origin} scale(0.33333)`} d={t.patches} fill="#f6f7f7" />
        ))}
      </g>
      <g fill="none" strokeLinejoin="round">
        {tiles.map((t) => (
          <g key={t.origin} transform={`${t.origin} scale(0.33333)`}>
            <path d={t.minor} stroke="#d5dbe6" strokeWidth="4" />
            <path d={t.streams} stroke="#a0e2ee" strokeWidth="5" />
            {t.river && <path d={t.river} stroke="#90daee" strokeWidth="17" />}
          </g>
        ))}
        <path d="M737 254L700 271 653 300 623 319" stroke="#c3cbdb" strokeWidth="3" />
        {tiles.map((t) => (
          <path key={t.origin} transform={`${t.origin} scale(0.33333)`} d={t.roads} stroke="#a2b0d0" strokeWidth="13" />
        ))}
      </g>
      <path
        d="M116 88q2 8 10 10-8 2-10 10-2-8-10-10 8-2 10-10zM436 88q2 8 10 10-8 2-10 10-2-8-10-10 8-2 10-10zM116 408q2 8 10 10-8 2-10 10-2-8-10-10 8-2 10-10zM436 408q2 8 10 10-8 2-10 10-2-8-10-10 8-2 10-10z"
        fill="#dcdedf"
      />
      <g stroke="#ffffff" strokeWidth="2.500" strokeOpacity="0.850" strokeLinejoin="round" paintOrder="stroke">
        {labels.map((l) => {
          const s = labelStyles[l.kind];
          return (
            <text
              key={l.text + l.x}
              x={l.x}
              y={l.y}
              fontSize={s.size}
              fontWeight={s.weight}
              fill={s.fill}
              textAnchor={l.anchor ?? "start"}
            >
              {l.text}
            </text>
          );
        })}
        {pathLabels.map((p) => (
          <text key={p.id} fontSize={p.size} fontWeight="500" fill={p.fill}>
            <textPath href={`#${p.id}`}>{p.text}</textPath>
          </text>
        ))}
      </g>
      <Shield x={231} y={340} text="57" />
      <Shield x={384} y={336} text="2" />
      <Shield x={417} y={480} text="2" />
      <Shield x={449} y={655} text="2" />
      <Shield x={357} y={138} text="E1" yellow />
      <Shield x={455} y={340} text="E1" yellow />
      <Shield x={467} y={456} text="E1" yellow />
      <PoiPin x={127} y={155} kind="church" />
      <PoiPin x={462} y={72} kind="church" />
      <PoiPin x={56} y={201} kind="resort" />
      <PoiPin x={716} y={348} kind="resort" />
      <PoiPin x={109} y={564} kind="resort" />
      <PoiPin x={657} y={584} kind="resort" />
      <PoiPin x={289} y={403} kind="hotel" />
      {accidentPins.map(([x, y]) => (
        <PinShadow key={`${x}-${y}`} x={x} y={y} />
      ))}
      {accidentPins.map(([x, y]) => (
        <AccidentPin key={`${x}-${y}`} x={x} y={y} />
      ))}
    </MapSvg>
  );
}

function LayersIcon() {
  return (
    <svg width="34" height="33" viewBox="0 0 34 33" aria-hidden="true">
      <path d="M0 21L17 32 34 21 30 19 17 27 4 19Z" fill="#b3b3b3" stroke="#777777" strokeWidth="0.600" />
      <path d="M0 16.500L17 27 34 16.500 30 14 17 22 4 14Z" fill="#cbcbcb" stroke="#6b6b6b" strokeWidth="0.600" />
      <path d="M0 11.500L17 0 34 11.500 17 22Z" fill="#f0f0f0" stroke="#bdbdbd" strokeWidth="0.600" />
      <path d="M5 12L17 5.500 29 12 17 20Z" fill="#dcdcdc" />
      <path d="M0 11.500L17 22 34 11.500" fill="none" stroke="#666666" strokeWidth="1" />
    </svg>
  );
}

function BrandLogo() {
  return (
    <svg width="53" height="32" viewBox="60 68 158 95" role="img" aria-label="Logo">
      <g fill="#08568c">
        <path d="M60 101L140 150 218 101V115L140 163 60 115Z" />
        <path d="M82 97Q104 68 140 68 181 70 201 102L188 109Q166 78 130 78 102 80 82 97Z" />
        <path d="M98 109Q113 90 143 90 169 92 182 113L170 120Q156 100 132 100 113 100 98 109Z" />
        <path d="M115 121Q124 111 140 111 155 113 162 124L150 131Q142 118 115 121Z" />
      </g>
    </svg>
  );
}

export default function App() {
  return (
    <Frame>
      <GlobalStyle />
      <Shell>
        <Header>
          <BrandLogo />
          <PageTitle>
            Intelligent Road Accident Management System for Prescriptive and Vulnerability
            <br />
            Modelling Using Machine Learning Analytics
          </PageTitle>
          <Clock dateTime="2024-05-21T10:12:40">Tuesday, May 21, 2024 at 10:12:40 AM</Clock>
        </Header>
        <Body>
          <Sidebar>
            <MenuButton type="button" aria-label="Toggle menu">
              <BiMenu />
            </MenuButton>
            <nav aria-label="Main">
              <NavList>
                <li><NavLink href="#dashboard" aria-label="Dashboard" $active><BiGridAlt /></NavLink></li>
                <li><NavLink href="#map" aria-label="Map"><BiMap /></NavLink></li>
                <li><NavLink href="#analytics" aria-label="Analytics"><BiPieChartAlt /></NavLink></li>
                <li><NavLink href="#files" aria-label="Files"><BiFolder /></NavLink></li>
              </NavList>
            </nav>
          </Sidebar>
          <Main>
            <LeftColumn>
              <Weather />
              <ChartCard>
                <CardHeader>
                  <CardTitle>Trend and Predicted Road Accidents</CardTitle>
                  <PillButton type="button">Show Forecast</PillButton>
                </CardHeader>
                <AccidentChart />
              </ChartCard>
            </LeftColumn>
            <Card>
              <CardTitle>Barangay-Level Data Visualization</CardTitle>
              <MapArea>
                <MapDrawing />
                <ZoomControl>
                  <ZoomButton type="button" aria-label="Zoom in">
                    <svg width="16" height="16" viewBox="0 0 16 16"><path d="M0 8H16M8 0V16" stroke="#000" strokeWidth="2.400" /></svg>
                  </ZoomButton>
                  <ZoomButton type="button" aria-label="Zoom out">
                    <svg width="16" height="16" viewBox="0 0 16 16"><path d="M0 8H16" stroke="#000" strokeWidth="2" /></svg>
                  </ZoomButton>
                </ZoomControl>
                <LayersButton type="button" aria-label="Layers">
                  <LayersIcon />
                </LayersButton>
                <Attribution>
                  <a href="#leaflet">Leaflet</a> | © <a href="#openstreetmap">OpenStreetMap</a>
                </Attribution>
              </MapArea>
            </Card>
          </Main>
        </Body>
      </Shell>
    </Frame>
  );
}
